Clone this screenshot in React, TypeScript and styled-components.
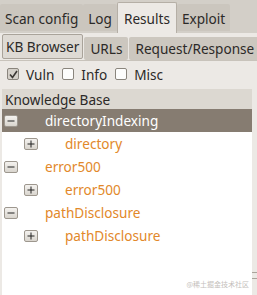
import styled, { createGlobalStyle } from 'styled-components'

const Global = createGlobalStyle`
  html, body {
    margin: 0;
    padding: 0;
    background: #dcd8d1;
    font-family: "Noto Sans", "DejaVu Sans", sans-serif;
    font-size: 13.6px;
  }
  * { box-sizing: border-box; }
`

const Window = styled.div`
  width: 257px;
  height: 295px;
  display: flex;
  flex-direction: column;
  background: #ece9e5;
  overflow: hidden;
  position: relative;
`

const TopTabs = styled.div`
  display: flex;
  align-items: flex-end;
  height: 33px;
  background: #d3cfc8;
`

const TopTab = styled.div<{ active?: boolean }>`
  height: ${(p) => (p.active ? '31px' : '27px')};
  padding: 0 ${(p) => (p.active ? '6px' : '4px')};
  display: flex;
  align-items: center;
  color: #2c2a28;
  background: ${(p) => (p.active ? '#ece9e5' : '#cbc6be')};
  border: 1px solid ${(p) => (p.active ? '#b5afa6' : 'transparent')};
  border-bottom: none;
  border-radius: 2px 2px 0 0;
  margin-bottom: ${(p) => (p.active ? '0' : '2px')};
  white-space: nowrap;
`

const SubTabs = styled.div`
  display: flex;
  align-items: flex-end;
  height: 28px;
  padding-left: 2px;
  border-bottom: 1px solid #c8c3bb;
  background: #ece9e5;
`

const SubTab = styled.div<{ active?: boolean }>`
  height: ${(p) => (p.active ? '25px' : '23px')};
  padding: 0 ${(p) => (p.active ? '3px' : '5px')};
  display: flex;
  align-items: center;
  color: #2c2a28;
  background: ${(p) => (p.active ? '#dedad4' : '#ccc7bf')};
  border: 1px solid ${(p) => (p.active ? '#a9a39a' : 'transparent')};
  border-radius: 2px;
  margin-bottom: ${(p) => (p.active ? '1px' : '0')};
  margin-right: 1px;
  white-space: nowrap;
`

const Checks = styled.div`
  display: flex;
  align-items: center;
  height: 26px;
  padding-left: 7px;
  color: #2c2a28;
`

const Check = styled.span<{ checked?: boolean }>`
  width: 12px;
  height: 12px;
  border: 1px solid #8a857d;
  border-radius: 2px;
  background: ${(p) => (p.checked ? '#d4d0c9' : '#fdfdfc')};
  display: inline-flex;
  align-items: center;
  justify-content: center;
  margin-right: 7px;
`

const Label = styled.span`
  margin-right: 8px;
`

const Tree = styled.div`
  flex: 1;
  margin: 2px 5px 0 2px;
  background: #ffffff;
  display: flex;
  flex-direction: column;
`

const Header = styled.div`
  height: 20px;
  display: flex;
  align-items: center;
  padding-left: 3px;
  background: #dcd8d1;
  color: #2c2a28;
`

const Row = styled.div<{ selected?: boolean; depth: number }>`
  height: 23px;
  display: flex;
  align-items: center;
  padding-left: ${(p) => 2 + p.depth * 20}px;
  background: ${(p) => (p.selected ? '#867c71' : 'transparent')};
  color: ${(p) => (p.selected ? '#ffffff' : '#e2882a')};
`

const Expander = styled.span`
  width: 14px;
  height: 12px;
  border: 1px solid #9d978e;
  border-radius: 2px;
  background: linear-gradient(#f4f2ef, #d9d5ce);
  display: inline-flex;
  align-items: center;
  justify-content: center;
  margin-right: 27px;
`

const Watermark = styled.div`
  position: absolute;
  right: 8px;
  bottom: 6px;
  font-size: 7px;
  color: #c4c0bb;
  font-family: "Noto Sans CJK SC", sans-serif;
`

const Grip = styled.div`
  position: absolute;
  right: 0;
  top: 272px;
  width: 5px;
  height: 7px;
  border-top: 1px solid #aaa49b;
  border-bottom: 1px solid #aaa49b;
`

const Sign = ({ plus }: { plus?: boolean }) => (
  <svg width="8" height="8" viewBox="0 0 8 8">
    <path d={plus ? 'M0.5 4H7.5M4 0.5V7.5' : 'M0.5 4H7.5'} stroke="#222" strokeWidth="1" />
  </svg>
)

const CheckMark = () => (
  <svg width="9" height="9" viewBox="0 0 9 9">
    <path d="M1 4.5L3.5 7.5L8 1" stroke="#3a3733" strokeWidth="1.6" fill="none" />
  </svg>
)

const rows = [
  { depth: 0, text: 'directoryIndexing', open: true, selected: true },
  { depth: 1, text: 'directory', open: false },
  { depth: 0, text: 'error500', open: true },
  { depth: 1, text: 'error500', open: false },
  { depth: 0, text: 'pathDisclosure', open: true },
  { depth: 1, text: 'pathDisclosure', open: false },
]

export default function App() {
  return (
    <Window>
      <Global />
      <TopTabs>
        <TopTab>Scan config</TopTab>
        <TopTab>Log</TopTab>
        <TopTab active>Results</TopTab>
        <TopTab>Exploit</TopTab>
      </TopTabs>
      <SubTabs>
        <SubTab active>KB Browser</SubTab>
        <SubTab>URLs</SubTab>
        <SubTab>Request/Response</SubTab>
      </SubTabs>
      <Checks>
        <Check checked>
          <CheckMark />
        </Check>
        <Label>Vuln</Label>
        <Check />
        <Label>Info</Label>
        <Check />
        <Label>Misc</Label>
      </Checks>
      <Tree>
        <Header>Knowledge Base</Header>
        {rows.map((r, i) => (
          <Row key={i} depth={r.depth} selected={r.selected}>
            <Expander>
              <Sign plus={!r.open} />
            </Expander>
            {r.text}
          </Row>
        ))}
      </Tree>
      <Grip />
      <Watermark>@稀土掘金技术社区</Watermark>
    </Window>
  )
}
